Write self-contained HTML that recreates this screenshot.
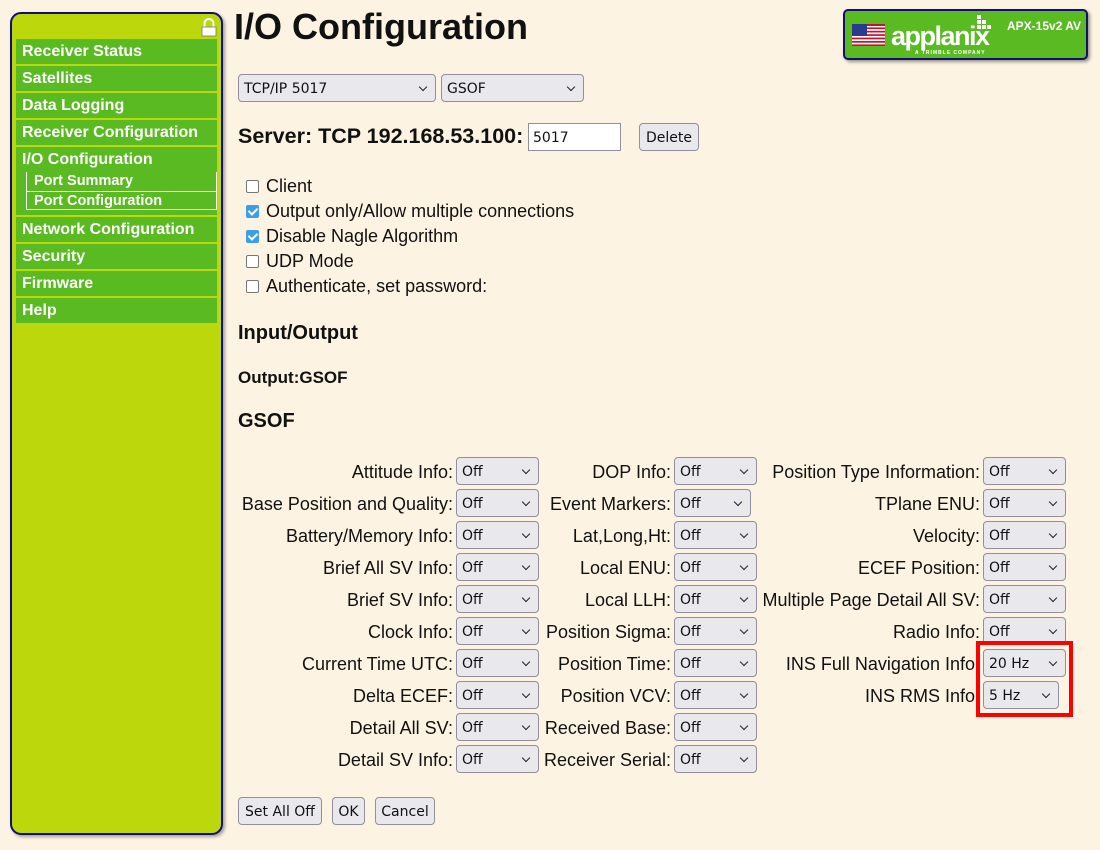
<!DOCTYPE html>
<html><head><meta charset="utf-8">
<style>
*{box-sizing:border-box;margin:0;padding:0}
body{width:1100px;height:850px;background:#fdf3e3;font-family:"Liberation Sans",sans-serif;color:#111;position:relative;overflow:hidden}
.side{position:absolute;left:10px;top:12px;width:213px;height:823px;background:#bcd80c;border:2px solid #101070;border-radius:11px;box-shadow:2px 2px 3px rgba(0,0,0,.35)}
.mi{position:absolute;left:4px;width:201px;height:25px;background:#5aba22;color:#fff;font-weight:bold;font-size:16px;line-height:25px;padding-left:6px}
.sub{position:absolute;left:14px;width:191px;height:19px;border-left:1px solid #fff;border-right:1px solid #fff;color:#fff;font-weight:bold;font-size:14.5px;line-height:18px;padding-left:7px}
h1{position:absolute;left:234px;top:6px;font-size:36px;font-weight:bold}
.abs{position:absolute;white-space:nowrap}
.sel{position:absolute;height:28px;background:#e9e9ed;border:1px solid #8f8f9d;border-radius:4px;font-family:"DejaVu Sans",sans-serif;font-size:14px;line-height:28px;padding-left:5px;color:#111}
.sel:after{content:"";position:absolute;right:9px;top:9px;width:5px;height:5px;border-right:1.6px solid #222;border-bottom:1.6px solid #222;transform:rotate(45deg)}
.lbl{position:absolute;font-size:18px;text-align:right;line-height:20px;white-space:nowrap}
.cb{position:absolute;left:246px;width:13px;height:13px;border:1.5px solid #777;border-radius:2px;background:#fff}
.cb.on{background:#3c9ee6;border-color:#3c9ee6}
.cb.on:after{content:"";position:absolute;left:3px;top:0px;width:4px;height:7px;border-right:2px solid #fff;border-bottom:2px solid #fff;transform:rotate(45deg)}
.ct{position:absolute;left:266px;font-size:18px;line-height:20px;white-space:nowrap}
.btn{position:absolute;height:28px;background:#e9e9ed;border:1px solid #8f8f9d;border-radius:4px;font-family:"DejaVu Sans",sans-serif;font-size:14px;line-height:28px;text-align:center}
</style></head><body>
<div class="side">
  <svg class="abs" style="left:189px;top:4px" width="16" height="19" viewBox="0 0 16 19"><path d="M3.5 9V5.5a4.5 4.5 0 0 1 9 0V9" fill="none" stroke="#fff" stroke-width="2"/><rect x="1" y="9" width="14" height="9" fill="#fff" stroke="#777" stroke-width=".8"/></svg>
  <div class="mi" style="top:25px">Receiver Status</div>
  <div class="mi" style="top:52px">Satellites</div>
  <div class="mi" style="top:79px">Data Logging</div>
  <div class="mi" style="top:106px">Receiver Configuration</div>
  <div class="mi" style="top:133px;height:68px">I/O Configuration</div>
  <div class="sub" style="top:158px">Port Summary</div>
  <div class="sub" style="top:177px;border-top:1px solid #fff;border-bottom:1px solid #fff">Port Configuration</div>
  <div class="mi" style="top:203px">Network Configuration</div>
  <div class="mi" style="top:230px">Security</div>
  <div class="mi" style="top:257px">Firmware</div>
  <div class="mi" style="top:284px">Help</div>
</div>
<h1>I/O Configuration</h1>
<div class="abs" style="left:843px;top:9px;width:245px;height:51px;background:#5aba22;border:2px solid #101070;border-radius:5px;box-shadow:2px 2px 3px rgba(0,0,0,.4)">
  <svg class="abs" style="left:7px;top:13px" width="33" height="22" viewBox="0 0 33 22"><rect width="33" height="22" fill="#fff"/><g fill="#c8102e"><rect y="0" width="33" height="2"/><rect y="3.4" width="33" height="1.7"/><rect y="6.8" width="33" height="1.7"/><rect y="10.2" width="33" height="1.7"/><rect y="13.6" width="33" height="1.7"/><rect y="17" width="33" height="1.7"/><rect y="20.4" width="33" height="1.6"/></g><rect width="15" height="12" fill="#2a3a8c"/></svg>
  <div class="abs" style="left:46px;top:10px;color:#fff;font-weight:bold;font-size:27px;letter-spacing:-1.5px;line-height:30px">applanix</div>
  <div class="abs" style="left:70px;top:39px;color:#fff;font-size:5px;letter-spacing:1px;font-weight:bold">A TRIMBLE COMPANY</div>
  <svg class="abs" style="left:130px;top:4px" width="20" height="18" viewBox="0 0 20 18"><g fill="#fff"><rect x="2" y="0" width="4" height="4"/><rect x="2" y="5" width="4" height="4"/><rect x="7" y="5" width="4" height="4"/><rect x="2" y="10" width="4" height="4"/><rect x="7" y="10" width="4" height="4"/><rect x="12" y="10" width="4" height="4"/></g></svg>
  <div class="abs" style="left:162px;top:8px;color:#fff;font-weight:bold;font-size:12px">APX-15v2 AV</div>
</div>

<div class="sel" style="left:238px;top:74px;width:198px">TCP/IP 5017</div>
<div class="sel" style="left:441px;top:74px;width:143px">GSOF</div>
<div class="abs" style="left:238px;top:124px;font-size:21.5px;font-weight:bold">Server: TCP 192.168.53.100:</div>
<div class="abs" style="left:528px;top:123px;width:93px;height:28px;border:1px solid #8f8f9d;background:#fff;font-family:'DejaVu Sans',sans-serif;font-size:14px;line-height:28px;padding-left:4px">5017</div>
<div class="btn" style="left:639px;top:123px;width:60px">Delete</div>

<div class="cb" style="top:180px"></div><div class="ct" style="top:176px">Client</div>
<div class="cb on" style="top:205px"></div><div class="ct" style="top:201px">Output only/Allow multiple connections</div>
<div class="cb on" style="top:230px"></div><div class="ct" style="top:226px">Disable Nagle Algorithm</div>
<div class="cb" style="top:255px"></div><div class="ct" style="top:251px">UDP Mode</div>
<div class="cb" style="top:280px"></div><div class="ct" style="top:276px">Authenticate, set password:</div>

<div class="abs" style="left:238px;top:322px;font-size:20px;font-weight:bold">Input/Output</div>
<div class="abs" style="left:238px;top:368px;font-size:17px;font-weight:bold">Output:GSOF</div>
<div class="abs" style="left:238px;top:410px;font-size:20px;font-weight:bold">GSOF</div>

<div id="grid"></div>
<script>
var c1=["Attitude Info:","Base Position and Quality:","Battery/Memory Info:","Brief All SV Info:","Brief SV Info:","Clock Info:","Current Time UTC:","Delta ECEF:","Detail All SV:","Detail SV Info:"];
var c2=["DOP Info:","Event Markers:","Lat,Long,Ht:","Local ENU:","Local LLH:","Position Sigma:","Position Time:","Position VCV:","Received Base:","Receiver Serial:"];
var c3=["Position Type Information:","TPlane ENU:","Velocity:","ECEF Position:","Multiple Page Detail All SV:","Radio Info:","INS Full Navigation Info:","INS RMS Info:"];
var h="";
function add(arr,right,sx,w,vals,ws){for(var i=0;i<arr.length;i++){var y=457+i*32;
h+='<div class="lbl" style="left:'+(right-400)+'px;width:400px;top:'+(y+5)+'px">'+arr[i]+'</div>';
h+='<div class="sel" style="left:'+sx+'px;top:'+y+'px;width:'+((ws&&ws[i])||w)+'px">'+((vals&&vals[i])||"Off")+'</div>';}}
add(c1,453,456,83);
add(c2,671,674,83,null,{1:77});
add(c3,980,983,83,{6:"20 Hz",7:"5 Hz"},{7:76});
document.getElementById("grid").innerHTML=h;
</script>
<div class="abs" style="left:976px;top:641px;width:97px;height:76px;border:4px solid #f00"></div>

<div class="btn" style="left:238px;top:797px;width:84px">Set All Off</div>
<div class="btn" style="left:332px;top:797px;width:33px">OK</div>
<div class="btn" style="left:375px;top:797px;width:60px">Cancel</div>
</body></html>
